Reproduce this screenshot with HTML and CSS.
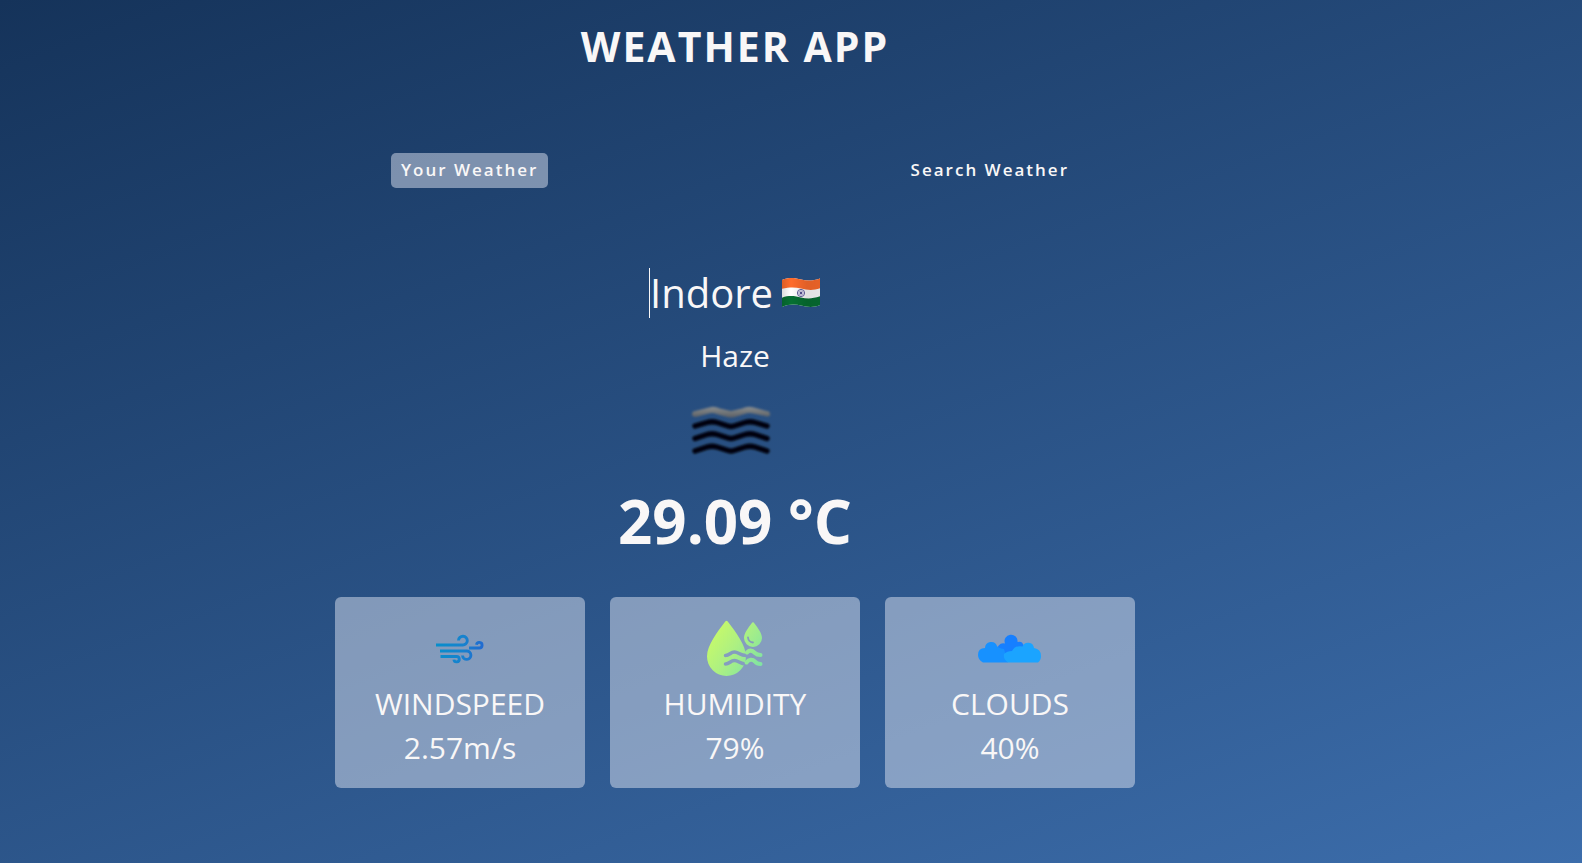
FILE: index.html
```
<!DOCTYPE html>
<html lang="en">
<head>
<meta charset="utf-8">
<meta name="viewport" content="width=device-width, initial-scale=1">
<title>Weather App</title>
<link rel="stylesheet" href="styles.css">
</head>
<body>
<main class="wrapper">
  <h1 class="title">WEATHER APP</h1>
  <nav class="tabs">
    <button class="tab tab-current" type="button">Your Weather</button>
    <button class="tab" type="button">Search Weather</button>
  </nav>
  <section class="weather">
    <div class="place">
      <p class="city">Indore</p>
      <svg class="flag" viewBox="0 0 40 30" role="img" aria-label="India">
        <defs>
          <clipPath id="wave"><path d="M1 2C8-1 14 0 20 1.500S32 3 39 .5V27C32 30 26 29 20 27.500S8 26 1 29Z"/></clipPath>
          <linearGradient id="shade"><stop offset="0" stop-opacity=".15"/><stop offset=".25" stop-opacity="0"/><stop offset=".65" stop-opacity=".12"/><stop offset="1" stop-opacity=".1"/></linearGradient>
        </defs>
        <g clip-path="url(#wave)">
          <path fill="#fff" d="M0 0h40v30H0z"/>
          <path fill="#ff6c2c" d="M0-2h40V10C32 13 26 12 20 10.500S8 9 0 11Z"/>
          <path fill="#067032" d="M0 20C8 17 14 18 20 19.500S32 21 40 18V32H0Z"/>
          <path fill="url(#shade)" d="M0 0h40v30H0z"/>
        </g>
        <circle cx="20" cy="15" r="3.600" fill="#e5e3f0" stroke="#5a5792" stroke-width="1"/>
        <path d="M20 11.500v7M16.500 15h7M17.600 12.600l4.800 4.800M22.400 12.600l-4.800 4.800" stroke="#77739f" stroke-width=".5"/>
        <circle cx="20" cy="15" r="1.200" fill="#4d4a87"/>
      </svg>
    </div>
    <p class="condition">Haze</p>
    <svg class="haze" viewBox="0 0 80 48" aria-hidden="true">
      <defs>
        <linearGradient id="mist" x1="0" y1="0" x2="0" y2="1"><stop offset="0" stop-color="#8b8e90"/><stop offset="1" stop-color="#5c6064"/></linearGradient>
        <filter id="soft" x="-10%" y="-10%" width="120%" height="120%"><feGaussianBlur stdDeviation=".8"/></filter>
      </defs>
      <g filter="url(#soft)">
        <path fill="url(#mist)" d="M2 4.500Q10 2.500 18 .5Q23-1.500 29 1.500L40 4L51 1.500Q57-1.500 63 .5Q70 2.500 78 4.500Q81 10 76 9.500L62 6.500Q57 5 52 7.500L44 10Q40 11 36 10L27 7.500Q22 5 18 6.500L5 10Q-1 10 2 4.500Z"/>
        <g fill="none" stroke="#02050a" stroke-width="5.300" stroke-linecap="round" stroke-linejoin="round">
          <path d="M4 19L16 15.500Q21 14 26 15.500L37 19Q40 20 43 19L54 15.500Q59 14 64 15.500L76 19"/>
          <path d="M4 31.500L16 27.500Q21 26 26 27.500L37 31Q40 32 43 31L54 27.500Q59 26 64 27.500L76 31.500"/>
          <path d="M4 44L16 40Q21 38.500 26 40L37 43.500Q40 44.500 43 43.500L54 40Q59 38.500 64 40L76 44"/>
        </g>
      </g>
    </svg>
    <p class="temperature">29.09 °C</p>
    <div class="cards">
      <article class="card">
        <svg class="card-icon" viewBox="0 0 64 64" aria-hidden="true">
          <defs><linearGradient id="air" gradientUnits="userSpaceOnUse" x1="9" y1="28" x2="56" y2="36"><stop stop-color="#078ecb"/><stop offset=".55" stop-color="#1782ce"/><stop offset="1" stop-color="#2268d1"/></linearGradient></defs>
          <g fill="none" stroke="url(#air)" stroke-width="2.900">
            <path d="M8 28H34.500A4.400 4.400 0 1 0 30.500 23.500"/>
            <path d="M12 34H38.500A4.200 4.200 0 1 1 34.500 38.500"/>
            <path d="M12.500 39.500H28.500A2.700 2.700 0 1 1 25.900 42.600"/>
            <path d="M41 31H51.200A2.800 2.800 0 1 0 48.500 27.800"/>
          </g>
        </svg>
        <h2 class="card-label">WINDSPEED</h2>
        <p class="card-value">2.57m/s</p>
      </article>
      <article class="card">
        <svg class="card-icon" viewBox="0 0 64 64" aria-hidden="true">
          <defs>
            <linearGradient id="water" gradientUnits="userSpaceOnUse" x1="8" y1="14" x2="60" y2="50"><stop stop-color="#c8fa68"/><stop offset=".45" stop-color="#adf082"/><stop offset="1" stop-color="#7ce3a5"/></linearGradient>
            <mask id="cut">
              <path fill="#fff" d="M0 0h64v64H0z"/>
              <g fill="none" stroke="#000" stroke-width="3.500" stroke-linecap="round">
                <path d="M22.500 38.500C26.500 38.500 27.500 35 31.500 35S37 38.500 43 38.500"/>
                <path d="M22.500 47C26.500 47 27.500 43.500 31.500 43.500S37 47 43 47"/>
              </g>
            </mask>
          </defs>
          <g fill="url(#water)">
            <path mask="url(#cut)" d="M21.500 5.500Q23.500 2 25.500 5.500C32 14 43 28 43 39.500A19.500 19.500 0 0 1 4 39.500C4 28 15 14 21.500 5.500Z"/>
            <path d="M48.500 6.500Q50 4 51.500 6.500C55 11 59 16.500 59 21A9 9 0 0 1 41 21C41 16.500 45 11 48.500 6.500Z"/>
          </g>
          <path fill="none" stroke="#859cbc" stroke-width="1.800" stroke-linecap="round" d="M45 20.500Q45.500 25 50 25.500"/>
          <g fill="none" stroke="url(#water)" stroke-width="4" stroke-linecap="round">
            <path d="M44 35.500C46.500 33 49.500 33.500 52 36Q54 38 57.500 38"/>
            <path d="M43.500 45.500C46 42 49.500 42 52 44.500Q54 47 57.500 47"/>
          </g>
        </svg>
        <h2 class="card-label">HUMIDITY</h2>
        <p class="card-value">79%</p>
      </article>
      <article class="card">
        <svg class="card-icon" viewBox="0 0 64 64" aria-hidden="true">
          <path fill="#167fff" d="M20 35A6 6 0 0 1 27 26.500A6.500 6.500 0 1 1 39.500 25Q44 23.500 45.500 28V40H20Z"/>
          <path fill="#1791ff" d="M5 45.500Q0 43 0 38Q0 31 7 31A6.200 6.200 0 0 1 19 29Q20 31 26 32L30 45.500Z"/>
          <path fill="#1ba4ff" d="M30 45.500Q25 42 26 37Q29 34 34 34Q37 28 44.500 29.500A6 6 0 0 1 56 31Q63 32 63 39Q63 43 60 45.500Z"/>
        </svg>
        <h2 class="card-label">CLOUDS</h2>
        <p class="card-value">40%</p>
      </article>
    </div>
  </section>
</main>
</body>
</html>
```
FILE: styles.css
```
* { box-sizing: border-box; margin: 0; padding: 0; }

body {
  min-height: 100vh;
  font-family: "Open Sans", "Noto Sans", sans-serif;
  color: #f9f7f7;
  background-image: linear-gradient(160deg, #15335a 0%, #3c6dab 100%);
}

.wrapper {
  display: flex;
  flex-direction: column;
  align-items: center;
  padding: 14px 112px 64px 0;
}

.title {
  font-size: 41px;
  line-height: 64px;
  font-weight: 700;
  letter-spacing: 2px;
}

.tabs {
  display: flex;
  justify-content: space-between;
  width: 100%;
  max-width: 688px;
  margin-top: 75px;
}

.tab {
  padding: 4px 10px 6px;
  border: 0;
  border-radius: 5px;
  background: transparent;
  color: inherit;
  font-family: inherit;
  font-size: 17px;
  line-height: 25px;
  font-weight: 600;
  letter-spacing: 2px;
  cursor: pointer;
}

.tab-current { background: rgba(219, 226, 239, 0.5); }

.weather {
  display: flex;
  flex-direction: column;
  align-items: center;
  width: 100%;
  margin-top: 80px;
}

.place {
  display: flex;
  align-items: center;
  gap: 8px;
}

.city {
  border-left: 1px solid #f9f7f7;
  font-size: 40px;
  line-height: 50px;
  font-weight: 400;
}

.flag { width: 40px; height: 30px; }

.condition {
  margin-top: 18px;
  font-size: 30px;
  line-height: 40px;
  font-weight: 400;
}

.haze {
  width: 80px;
  height: 48px;
  margin: 31px 8px 0 0;
  overflow: visible;
}

.temperature {
  margin-top: 30px;
  font-size: 60px;
  line-height: 72px;
  font-weight: 700;
}

.cards {
  display: grid;
  grid-template-columns: repeat(3, minmax(0, 250px));
  justify-content: center;
  gap: 25px;
  width: 100%;
  margin-top: 40px;
}

.card {
  display: flex;
  flex-direction: column;
  align-items: center;
  padding: 20px 16px 18px;
  border-radius: 6px;
  background: rgba(219, 226, 239, 0.5);
}

.card-icon { width: 64px; height: 64px; margin-bottom: 1px; }

.card-label,
.card-value {
  font-size: 30px;
  line-height: 44px;
  font-weight: 400;
}
```
